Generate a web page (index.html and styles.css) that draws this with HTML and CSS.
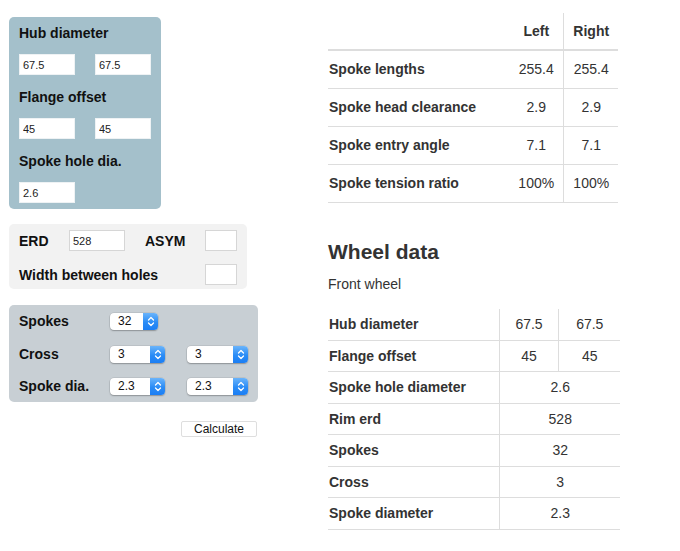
FILE: index.html
```html
<!DOCTYPE html>
<html>
<head>
<meta charset="utf-8">
<link rel="stylesheet" href="styles.css">
</head>
<body>
<div class="page">
  <div class="left">
    <div class="panel hub">
      <div class="lbl first">Hub diameter</div>
      <div class="pair"><input class="in" value="67.5"><input class="in" value="67.5"></div>
      <div class="lbl">Flange offset</div>
      <div class="pair"><input class="in" value="45"><input class="in" value="45"></div>
      <div class="lbl">Spoke hole dia.</div>
      <div class="pair last"><input class="in" value="2.6"></div>
    </div>

    <div class="panel rim">
      <div class="rim-row">
        <span class="lbl erd">ERD</span>
        <input class="in rimin" value="528">
        <span class="lbl asym">ASYM</span>
        <input class="in small" value="">
      </div>
      <div class="rim-row">
        <span class="lbl wbh">Width between holes</span>
        <input class="in small" value="">
      </div>
    </div>

    <div class="panel spokes">
      <span class="lbl">Spokes</span>
      <div class="sel w48"><span class="sel-val">32</span><span class="sel-btn"><svg width="8" height="11" viewBox="0 0 8 11"><path d="M1.5 4 L4 1.5 L6.5 4 M1.5 7 L4 9.5 L6.5 7" fill="none" stroke="#fff" stroke-width="1.3" stroke-linecap="round" stroke-linejoin="round"/></svg></span></div>
      <span></span>

      <span class="lbl">Cross</span>
      <div class="sel w55"><span class="sel-val">3</span><span class="sel-btn"><svg width="8" height="11" viewBox="0 0 8 11"><path d="M1.5 4 L4 1.5 L6.5 4 M1.5 7 L4 9.5 L6.5 7" fill="none" stroke="#fff" stroke-width="1.3" stroke-linecap="round" stroke-linejoin="round"/></svg></span></div>
      <div class="sel"><span class="sel-val">3</span><span class="sel-btn"><svg width="8" height="11" viewBox="0 0 8 11"><path d="M1.5 4 L4 1.5 L6.5 4 M1.5 7 L4 9.5 L6.5 7" fill="none" stroke="#fff" stroke-width="1.3" stroke-linecap="round" stroke-linejoin="round"/></svg></span></div>

      <span class="lbl">Spoke dia.</span>
      <div class="sel w55"><span class="sel-val">2.3</span><span class="sel-btn"><svg width="8" height="11" viewBox="0 0 8 11"><path d="M1.5 4 L4 1.5 L6.5 4 M1.5 7 L4 9.5 L6.5 7" fill="none" stroke="#fff" stroke-width="1.3" stroke-linecap="round" stroke-linejoin="round"/></svg></span></div>
      <div class="sel"><span class="sel-val">2.3</span><span class="sel-btn"><svg width="8" height="11" viewBox="0 0 8 11"><path d="M1.5 4 L4 1.5 L6.5 4 M1.5 7 L4 9.5 L6.5 7" fill="none" stroke="#fff" stroke-width="1.3" stroke-linecap="round" stroke-linejoin="round"/></svg></span></div>
    </div>

    <div class="calc-row"><button class="calc">Calculate</button></div>
  </div>

  <div class="right">
    <table class="res">
      <colgroup><col class="c1"><col class="c2"><col class="c3"></colgroup>
      <thead>
        <tr><th></th><th class="num">Left</th><th class="num vl">Right</th></tr>
      </thead>
      <tbody>
        <tr><th>Spoke lengths</th><td class="num">255.4</td><td class="num vl">255.4</td></tr>
        <tr><th>Spoke head clearance</th><td class="num">2.9</td><td class="num vl">2.9</td></tr>
        <tr><th>Spoke entry angle</th><td class="num">7.1</td><td class="num vl">7.1</td></tr>
        <tr><th>Spoke tension ratio</th><td class="num">100%</td><td class="num vl">100%</td></tr>
      </tbody>
    </table>

    <h2 class="title">Wheel data</h2>
    <p class="sub">Front wheel</p>

    <table class="wheel">
      <colgroup><col class="w1"><col class="w2"><col class="w3"></colgroup>
      <tbody>
        <tr><th>Hub diameter</th><td class="num vl">67.5</td><td class="num vl">67.5</td></tr>
        <tr><th>Flange offset</th><td class="num vl">45</td><td class="num vl">45</td></tr>
        <tr><th>Spoke hole diameter</th><td class="num vl" colspan="2">2.6</td></tr>
        <tr><th>Rim erd</th><td class="num vl" colspan="2">528</td></tr>
        <tr><th>Spokes</th><td class="num vl" colspan="2">32</td></tr>
        <tr><th>Cross</th><td class="num vl" colspan="2">3</td></tr>
        <tr><th>Spoke diameter</th><td class="num vl" colspan="2">2.3</td></tr>
      </tbody>
    </table>
  </div>
</div>
</body>
</html>
```

FILE: styles.css
```css
* { box-sizing: border-box; }
html, body { margin: 0; padding: 0; background: #fff; }
body { font-family: "Liberation Sans", Arial, sans-serif; font-size: 14px; color: #111; }

.page { display: flex; padding-left: 9px; gap: 70px; }
.left { width: 249px; padding-top: 17px; display: flex; flex-direction: column; align-items: flex-start; }

.panel { border-radius: 5px; }
.lbl { font-weight: bold; font-size: 14px; line-height: 16px; color: #111; }

.hub { width: 152px; background: #a4c0cb; padding: 8px 10px 6px; }
.hub .lbl { display: block; margin-bottom: 13px; }
.pair { display: flex; gap: 20px; margin-bottom: 14px; }
.pair.last { margin-bottom: 0; }

.in {
  width: 56px; height: 21px; margin: 0;
  border: 1px solid #d6d6d6; background: #fff;
  font-family: "Liberation Sans", Arial, sans-serif; font-size: 11px; color: #222;
  padding: 0 3px; outline: none;
}
.hub .in { border-color: #eef2f4; }

.rim { width: 238px; margin-top: 15px; background: #f2f2f2; padding: 6px 10px 4px; display: flex; flex-direction: column; gap: 13px; }
.rim-row { display: flex; align-items: center; height: 21px; }
.erd { width: 50px; }
.asym { width: 60px; margin-left: 20px; }
.wbh { flex: 1; }
.in.small { width: 32px; }

.spokes {
  width: 249px; margin-top: 16px; background: #c8cfd4; padding: 8px 10px 7px;
  display: grid; grid-template-columns: 91px 77px 61px; row-gap: 15.5px; align-items: center;
}
.spokes .lbl { margin-top: -1px; }
.sel {
  display: flex; align-items: stretch; height: 17px; width: 61px;
  background: #fff; border-radius: 4px;
  box-shadow: 0 0 0 0.5px rgba(0,0,0,0.12), 0 1px 1.5px rgba(0,0,0,0.25);
  font-size: 12px; color: #111;
}
.sel.w48 { width: 48px; }
.sel.w55 { width: 55px; }
.sel-val { flex: 1; padding-left: 8px; line-height: 17px; }
.sel-btn {
  width: 15px; display: flex; align-items: center; justify-content: center;
  background: linear-gradient(#6ab4fb, #2a8cf6 55%, #1b7ef4);
  border-radius: 0 4px 4px 0;
}

.calc-row { width: 249px; display: flex; justify-content: flex-end; margin-top: 19px; padding-right: 1px; }
.calc {
  width: 76px; height: 16px; padding: 0; margin: 0;
  background: #fff; border: 1px solid #dedede; border-radius: 2px;
  font-family: "Liberation Sans", Arial, sans-serif; font-size: 12px; color: #111; line-height: 14px;
}

.right { padding-top: 13px; color: #333; }
table { border-collapse: collapse; border-spacing: 0; table-layout: fixed; }
th, td { padding: 0 0 0 1px; font-size: 14px; color: #333; }
th { text-align: left; font-weight: bold; }
.num { text-align: center; }
.res { width: 290px; }
.res col.c1 { width: 181px; }
.res col.c2 { width: 54px; }
.res col.c3 { width: 55px; }
.res thead th { height: 37px; border-bottom: 2px solid #ddd; font-weight: bold; }
.res tbody th, .res tbody td { height: 38px; border-bottom: 1px solid #ddd; }
.res .vl { border-left: 1px solid #ddd; }

.title { margin: 37px 0 0; font-size: 21px; line-height: 24px; font-weight: bold; color: #333; }
.sub { margin: 10px 0 0; font-size: 14px; line-height: 20px; color: #333; }

.wheel { width: 292px; margin-top: 15px; }
.wheel col.w1 { width: 171px; }
.wheel col.w2 { width: 59px; }
.wheel col.w3 { width: 62px; }
.wheel th, .wheel td { height: 31.5px; border-bottom: 1px solid #ddd; }
.wheel .vl { border-left: 1px solid #ddd; }
```
